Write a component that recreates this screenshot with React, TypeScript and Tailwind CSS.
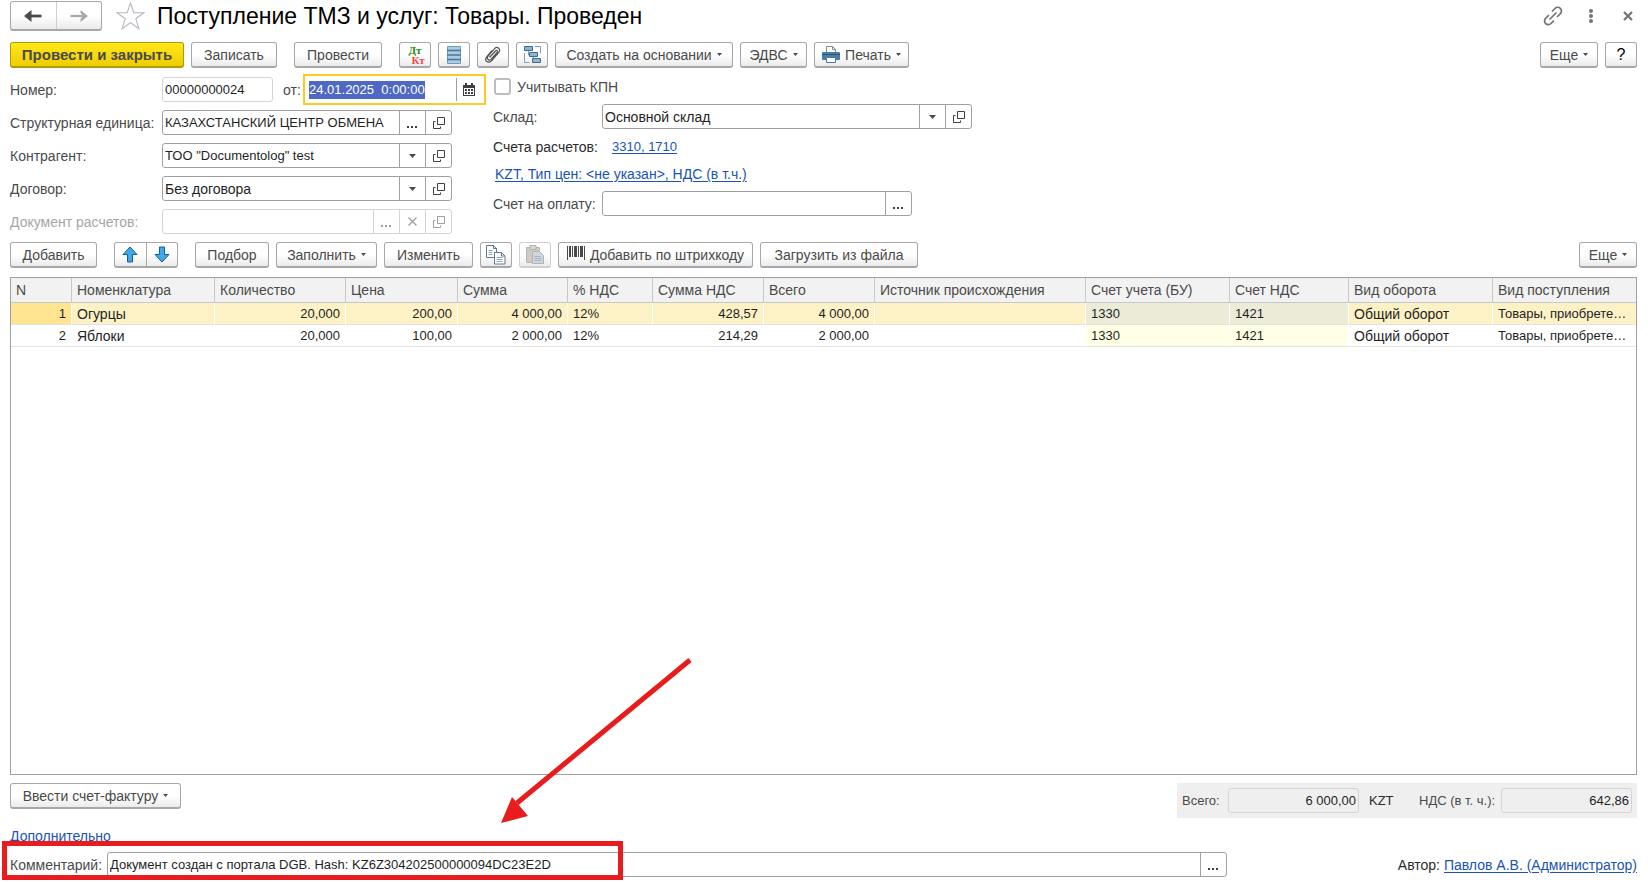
import { useEffect, useRef } from 'react';
import type { ReactNode } from 'react';
import clsx from 'clsx';

const columns = [
  { title: 'N', width: 'w-[61px]', align: 'text-right' },
  { title: 'Номенклатура', width: 'w-[143px]', size: 'text-[14px]' },
  { title: 'Количество', width: 'w-[131px]', align: 'text-right' },
  { title: 'Цена', width: 'w-[112px]', align: 'text-right' },
  { title: 'Сумма', width: 'w-[110px]', align: 'text-right' },
  { title: '% НДС', width: 'w-[85px]' },
  { title: 'Сумма НДС', width: 'w-[111px]', align: 'text-right' },
  { title: 'Всего', width: 'w-[111px]', align: 'text-right' },
  { title: 'Источник происхождения', width: 'w-[211px]' },
  { title: 'Счет учета (БУ)', width: 'w-[144px]', account: true },
  { title: 'Счет НДС', width: 'w-[119px]', account: true },
  { title: 'Вид оборота', width: 'w-[144px]', size: 'text-[14px]' },
  { title: 'Вид поступления', width: 'w-auto' },
];

const rows = [
  ['1', 'Огурцы', '20,000', '200,00', '4 000,00', '12%', '428,57', '4 000,00', '', '1330', '1421', 'Общий оборот', 'Товары, приобрете…'],
  ['2', 'Яблоки', '20,000', '100,00', '2 000,00', '12%', '214,29', '2 000,00', '', '1330', '1421', 'Общий оборот', 'Товары, приобрете…'],
];

function Caret({ small }: { small?: boolean }) {
  return (
    <svg width={small ? 5 : 7} height={small ? 3 : 4} viewBox="0 0 7 4" className="shrink-0">
      <path d="M0 0h7L3.5 4z" fill="#4a4a4a" />
    </svg>
  );
}

function OpenIcon() {
  return (
    <svg width="12" height="12" viewBox="0 0 12 12" fill="none" stroke="currentColor">
      <path d="M4.5 0.5h7v7h-7zM2.5 4.5h-2v7h7v-2" />
    </svg>
  );
}

type ButtonProps = {
  children: ReactNode;
  className?: string;
  menu?: boolean;
  label?: string;
  disabled?: boolean;
};

function Button({ children, className, menu, label, disabled }: ButtonProps) {
  return (
    <button
      type="button"
      aria-label={label}
      disabled={disabled}
      className={clsx(
        'flex h-[26px] shrink-0 items-center justify-center gap-[5px] rounded-[3px] border border-b-2 whitespace-nowrap',
        disabled ? 'border-[#cfcfcf]' : 'border-[#a8a8a8]',
        className ?? '',
        !className?.includes('from-') && 'bg-linear-to-b from-white from-50% to-[#ebebeb]',
      )}
    >
      {children}
      {menu && <Caret small />}
    </button>
  );
}

function SideButton({ children, label, disabled }: { children: ReactNode; label: string; disabled?: boolean }) {
  return (
    <button
      type="button"
      aria-label={label}
      disabled={disabled}
      className={clsx(
        'flex w-[26px] shrink-0 items-center justify-center border-l',
        disabled ? 'border-[#d4d4d4] text-[#a0a0a0]' : 'border-[#a0a0a0] text-[#404040]',
      )}
    >
      {children}
    </button>
  );
}

function Dots() {
  return (
    <svg width="11" height="12" viewBox="0 0 11 12" fill="currentColor">
      <path d="M0 9h2v2H0zM4 9h2v2H4zM8 9h2v2H8z" />
    </svg>
  );
}

function Field({ children, className, disabled }: { children: ReactNode; className?: string; disabled?: boolean }) {
  return (
    <div
      className={clsx(
        'flex h-[25px] overflow-hidden rounded-[3px] border bg-white',
        disabled ? 'border-[#d4d4d4]' : 'border-[#a0a0a0]',
        className,
      )}
    >
      {children}
    </div>
  );
}

function SelectField({ id, value, className }: { id: string; value: string; className: string }) {
  return (
    <Field className={className}>
      <div className="relative flex min-w-0 flex-1">
        <select id={id} className="w-full appearance-none bg-transparent pl-[2px] text-[#1f1f1f] outline-none">
          <option>{value}</option>
        </select>
        <span className="pointer-events-none absolute inset-y-0 right-0 flex w-[26px] items-center justify-center border-l border-[#a0a0a0]">
          <Caret />
        </span>
      </div>
      <SideButton label="Открыть">
        <OpenIcon />
      </SideButton>
    </Field>
  );
}

const input = 'min-w-0 flex-1 bg-transparent pl-[2px] text-[13px] text-[#1f1f1f] outline-none';
const totalInput = 'h-[25px] w-[131px] rounded-[3px] border border-[#d4d4d4] pr-[2px] text-right text-[#1f1f1f]';
const link = 'text-[#1a53b5] underline underline-offset-2';

function TitleBar() {
  return (
    <header className="flex h-[30px] items-center">
      <div className="flex h-[30px] w-[92px] rounded-[3px] border border-b-2 border-[#a8a8a8] bg-linear-to-b from-white from-50% to-[#ebebeb]">
        <button type="button" aria-label="Назад" className="flex flex-1 items-center justify-center border-r border-[#cfcfcf]">
          <svg width="18" height="12" viewBox="0 0 18 12">
            <path d="M4 6h13.500" stroke="#4a4a4a" strokeWidth="2.800" />
            <path d="M0 6L7.500 0v12z" fill="#4a4a4a" />
          </svg>
        </button>
        <button type="button" aria-label="Вперед" className="flex flex-1 items-center justify-center">
          <svg width="18" height="12" viewBox="0 0 18 12">
            <path d="M.5 6H14" stroke="#a9a9a9" strokeWidth="2.200" />
            <path d="M18 6L10.500 0v3L13 6l-2.500 3v3z" fill="#a9a9a9" />
          </svg>
        </button>
      </div>
      <button type="button" aria-label="В избранное" className="ml-[14px]">
        <svg width="29" height="28" viewBox="0 0 29 28" fill="none" stroke="#b4b9c0" strokeWidth="1.1">
          <path d="M14.500 1l3.300 9.700 10.200.1-8.200 6 3.100 9.900-8.400-6-8.400 6 3.100-9.900-8.200-6 10.200-.1z" />
        </svg>
      </button>
      <h1 className="ml-3 text-[23px] leading-[28px] text-black">Поступление ТМЗ и услуг: Товары. Проведен</h1>
      <div className="ml-auto flex items-center pr-1 text-[#747474]">
        <button type="button" aria-label="Ссылка">
          <svg width="20" height="20" viewBox="0 0 20 20" fill="none" stroke="currentColor" strokeWidth="1.7">
            <path d="M9 5.5L12 2.5a3.7 3.7 0 0 1 5.4 5.2L14 11M11 14.5L8 17.500a3.700 3.700 0 0 1-5.400-5.200L6 9M6.500 13.500l7-7" />
          </svg>
        </button>
        <button type="button" aria-label="Меню" className="ml-[26px]">
          <svg width="4" height="14" viewBox="0 0 4 14" fill="currentColor">
            <circle cx="2" cy="2" r="2" />
            <circle cx="2" cy="7" r="2" />
            <circle cx="2" cy="12" r="2" />
          </svg>
        </button>
        <button type="button" aria-label="Закрыть" className="ml-[30px]">
          <svg width="10" height="10" viewBox="0 0 10 10" fill="none" stroke="currentColor" strokeWidth="2.2">
            <path d="M1 1l8 8M9 1L1 9" />
          </svg>
        </button>
      </div>
    </header>
  );
}

function MainToolbar() {
  return (
    <div className="mt-[11px] flex">
      <Button className="w-[174px] border-[#b09a00] bg-linear-to-b from-[#ffe81a] to-[#efcd00] text-[15px] font-bold">
        Провести и закрыть
      </Button>
      <Button className="ml-[7px] w-[86px]">Записать</Button>
      <Button className="ml-[17px] w-[88px]">Провести</Button>
      <div className="ml-[17px] flex gap-[7px]">
        <Button className="w-[32px]" label="Дт/Кт">
          <span className="flex flex-col font-['Liberation_Serif',serif] text-[11px] leading-[10px] font-bold">
            <span className="text-[#2a8a0c]">Дт</span>
            <span className="pl-[6px] text-[#f04848]">Кт</span>
          </span>
        </Button>
        <Button className="w-[32px]" label="Регистр">
          <svg width="14" height="18" viewBox="0 0 14 18">
            <path d="M0.500 0.500h13v17h-13z" fill="#a9cbe4" stroke="#6f9cbc" />
            <path d="M0 4.500h14M0 9h14M0 13.500h14" stroke="#4d7593" strokeWidth="1.500" />
          </svg>
        </Button>
        <Button className="w-[32px]" label="Файлы">
          <svg width="16" height="17" viewBox="0 0 16 17" fill="none" stroke="#555" strokeWidth="1.2">
            <path d="M4.500 11.500l6-6.500c1.300-1.400 2.800.2 1.600 1.500L6.300 13.200c-2.200 2.300-5.300-.6-3.200-3L9.600 2.700c2.700-2.900 6.700.5 4.200 3.600l-7 8.200c-3.500 3.700-7.800.4-5.300-3.500L7 4.500" />
          </svg>
        </Button>
        <Button className="w-[32px]" label="Структура подчиненности">
          <svg width="19" height="19" viewBox="0 0 19 19" fill="none">
            <path d="M5.500 5v5h2M10.500 12v4M12 1.500h5.500v7M1.500 8v9.500h5" stroke="#7ba0bb" />
            <path d="M1.500 1.500h8v4h-8zM6.500 7.500h8v4h-8zM9.500 13.500h8v4h-8z" fill="#8fb4d0" stroke="#3c6a8c" />
          </svg>
        </Button>
        <Button className="w-[178px]" menu>Создать на основании</Button>
        <Button className="w-[67px]" menu>ЭДВС</Button>
        <Button className="w-[95px]" menu>
          <svg width="18" height="19" viewBox="0 0 18 19">
            <path d="M4.500 8V1.500h6l3 3V8" fill="#fff" stroke="#7b8b99" />
            <path d="M10.500 1.500v3h3" fill="none" stroke="#7b8b99" />
            <rect x="0" y="7" width="18" height="8" rx="1" fill="#4b7da3" />
            <path d="M0 9.500h18" stroke="#26587c" />
            <path d="M4.500 12.500h9v5h-9z" fill="#fff" stroke="#4b7da3" />
          </svg>
          Печать
        </Button>
      </div>
      <div className="ml-auto flex gap-[7px]">
        <Button className="w-[58px]" menu>Еще</Button>
        <Button className="w-[32px] text-[16px] text-black">?</Button>
      </div>
    </div>
  );
}

function HeaderFields() {
  const dateRef = useRef<HTMLInputElement>(null);

  useEffect(() => {
    dateRef.current?.focus();
    dateRef.current?.select();
  }, []);

  return (
    <div className="mt-[9px] flex items-start">
      <div className="grid w-[477px] grid-cols-[152px_290px] items-center gap-y-2">
        <label htmlFor="number">Номер:</label>
        <div className="flex h-[25px] items-center">
          <Field disabled className="w-[111px] shrink-0">
            <input id="number" defaultValue="00000000024" className={input} />
          </Field>
          <label htmlFor="date" className="w-[30px] shrink-0 pl-[10px]">от:</label>
          <div className="flex h-[31px] w-[183px] shrink-0 border-2 border-[#fcca20] bg-white py-[2px]">
            <input
              id="date"
              ref={dateRef}
              defaultValue="24.01.2025  0:00:00"
              className="min-w-0 flex-1 pl-1 text-[13px] text-[#1f1f1f] outline-none selection:bg-[#4f68c4] selection:text-white"
            />
            <button type="button" aria-label="Календарь" className="flex w-[28px] items-center border-l border-[#a0a0a0] pl-[6px]">
              <svg width="12" height="13" viewBox="0 0 12 13">
                <path d="M0 2h12v11H0z" fill="#404040" />
                <path d="M2 0h2v3H2zM8 0h2v3H8z" fill="#404040" />
                <path d="M1 5h10v7H1z" fill="#fff" />
                <path d="M2 6h2v2H2zM5 6h2v2H5zM8 6h2v2H8zM2 9h2v2H2zM5 9h2v2H5zM8 9h2v2H8z" fill="#404040" />
              </svg>
            </button>
          </div>
        </div>

        <label htmlFor="unit" className="whitespace-nowrap">Структурная единица:</label>
        <Field>
          <input id="unit" defaultValue="КАЗАХСТАНСКИЙ ЦЕНТР ОБМЕНА" className={input} />
          <SideButton label="Выбрать"><Dots /></SideButton>
          <SideButton label="Открыть"><OpenIcon /></SideButton>
        </Field>

        <label htmlFor="partner">Контрагент:</label>
        <SelectField id="partner" value={'ТОО "Documentolog" test'} className="w-full text-[13px]" />

        <label htmlFor="contract">Договор:</label>
        <SelectField id="contract" value="Без договора" className="w-full" />

        <label htmlFor="settlement" className="text-[#a6a6a6]">Документ расчетов:</label>
        <Field disabled>
          <input id="settlement" disabled className={input} />
          <SideButton label="Выбрать" disabled><Dots /></SideButton>
          <SideButton label="Очистить" disabled>
            <svg width="9" height="9" viewBox="0 0 9 9" stroke="currentColor" strokeWidth="1.400">
              <path d="M.5.5l8 8M8.500.5l-8 8" />
            </svg>
          </SideButton>
          <SideButton label="Открыть" disabled><OpenIcon /></SideButton>
        </Field>
      </div>

      <div className="ml-[6px] flex flex-col pt-px">
        <label className="flex h-[17px] items-center gap-[6px] pl-px">
          <input type="checkbox" className="size-[17px] appearance-none rounded-[3px] border-2 border-[#bdbdbd] bg-white" />
          Учитывать КПН
        </label>
        <div className="mt-[9px] flex items-center">
          <label htmlFor="warehouse" className="w-[109px]">Склад:</label>
          <SelectField id="warehouse" value="Основной склад" className="w-[370px]" />
        </div>
        <div className="mt-[9px] flex h-[18px] items-center text-[#2b2b2b]">
          <span className="w-[119px]">Счета расчетов:</span>
          <a href="#accounts" className={clsx(link, 'text-[13px]')}>3310, 1710</a>
        </div>
        <div className="mt-[9px] flex h-[18px] items-center pl-[2px]">
          <a href="#prices" className={link}>KZT, Тип цен: &lt;не указан&gt;, НДС (в т.ч.)</a>
        </div>
        <div className="mt-2 flex items-center">
          <label htmlFor="invoice" className="w-[109px]">Счет на оплату:</label>
          <Field className="w-[310px]">
            <input id="invoice" className={input} />
            <SideButton label="Выбрать"><Dots /></SideButton>
          </Field>
        </div>
      </div>
    </div>
  );
}

function PagesIcon() {
  return (
    <svg width="20" height="20" viewBox="0 0 20 20" fill="#fff" stroke="#64788a">
      <path d="M.5.5h7l3 3v9H.5zM7.500.5v3h3" />
      <path d="M2.500 5.500h4M2.500 7.500h4M2.500 9.500h4" stroke="#8fa6b8" />
      <path d="M8.500 7.500h7l3.500 3.500v8H8.500zM15.500 7.500v3.500H19" />
      <path d="M10.500 12.500h6M10.500 14.500h6M10.500 16.500h6" stroke="#8fa6b8" />
    </svg>
  );
}

function TableToolbar() {
  return (
    <div className="mt-2 flex gap-[7px]">
      <Button className="w-[87px]">Добавить</Button>
      <div className="mx-[10px] flex h-[26px] w-[64px] rounded-[3px] border border-b-2 border-[#a8a8a8] bg-linear-to-b from-white from-50% to-[#ebebeb]">
        <button type="button" aria-label="Вверх" className="flex flex-1 items-center justify-center border-r border-[#a8a8a8]">
          <svg width="16" height="17" viewBox="0 0 16 17">
            <path d="M8 1l7 7.500h-4.500V16h-5V8.500H1z" fill="#3fa9ec" stroke="#15608f" />
          </svg>
        </button>
        <button type="button" aria-label="Вниз" className="flex flex-1 items-center justify-center">
          <svg width="16" height="17" viewBox="0 0 16 17">
            <path d="M8 16l7-7.500h-4.500V1h-5v7.500H1z" fill="#3fa9ec" stroke="#15608f" />
          </svg>
        </button>
      </div>
      <Button className="w-[74px]">Подбор</Button>
      <Button className="w-[101px]" menu>Заполнить</Button>
      <Button className="w-[89px]">Изменить</Button>
      <Button className="w-[32px]" label="Скопировать"><PagesIcon /></Button>
      <Button className="w-[32px]" label="Вставить" disabled>
        <svg width="18" height="19" viewBox="0 0 18 19">
          <path d="M.5 2.500h13v15H.5z" fill="#cfcac4" stroke="#b9b4ae" />
          <path d="M4 .5h6v4H4z" fill="#d9d9d9" stroke="#b0b0b0" />
          <path d="M6.500 6.500h7l4 4v8h-11z" fill="#cfd6dc" stroke="#a9b4bd" />
          <path d="M8.500 11.500h6M8.500 13.500h7M8.500 15.500h7" stroke="#a9b4bd" />
        </svg>
      </Button>
      <Button className="w-[195px]">
        <svg width="18" height="14" viewBox="0 0 18 14" className="self-start mt-[3px]" fill="#4a4a4a">
          <path d="M0 0h1v14H0zM2 0h2v11H2zM5 0h1v11H5zM7 0h3v11H7zM11 0h1v11h-1zM13 0h3v11h-3zM17 0h1v14h-1z" />
        </svg>
        Добавить по штрихкоду
      </Button>
      <Button className="w-[158px]">Загрузить из файла</Button>
      <Button className="ml-auto w-[58px]" menu>Еще</Button>
    </div>
  );
}

function GoodsTable() {
  return (
    <div className="mt-[9px] flex-1 border border-[#a0a0a0] bg-white">
      <table className="w-full table-fixed border-separate border-spacing-0">
        <thead>
          <tr className="h-[25px]">
            {columns.map((col) => (
              <th
                key={col.title}
                className={clsx(
                  'border-r border-b border-[#c8c8c8] bg-[#f2f2f2] pl-[5px] text-left font-normal whitespace-nowrap last:border-r-0',
                  col.width,
                )}
              >
                {col.title}
              </th>
            ))}
          </tr>
        </thead>
        <tbody>
          {rows.map((row, r) => (
            <tr key={row[0]} className="h-[22px]">
              {row.map((cell, c) => (
                <td
                  key={columns[c].title}
                  className={clsx(
                    'border-r border-b border-r-white border-b-[#e3e3e3] px-[5px] whitespace-nowrap text-[#1f1f1f] last:border-r-0',
                    columns[c].align,
                    columns[c].size ?? 'text-[13px]',
                    r === 0 && (c === 0 ? 'bg-[#ffe491]' : columns[c].account ? 'bg-[#ebebd8]' : 'bg-[#fdf1c6]'),
                    r > 0 && columns[c].account && 'bg-[#ffffe6]',
                  )}
                >
                  {cell}
                </td>
              ))}
            </tr>
          ))}
        </tbody>
      </table>
    </div>
  );
}

function Footer() {
  return (
    <footer>
      <div className="mt-2 flex items-start justify-between">
        <Button className="w-[171px]" menu>Ввести счет-фактуру</Button>
        <div className="flex h-[35px] items-center bg-[#efefef] px-[5px] text-[13px]">
          <label htmlFor="total" className="w-[46px]">Всего:</label>
          <input id="total" readOnly value="6 000,00" className={totalInput} />
          <span className="w-[60px] pl-[10px] text-[#2b2b2b]">KZT</span>
          <label htmlFor="vat" className="w-[82px] whitespace-nowrap">НДС (в т. ч.):</label>
          <input id="vat" readOnly value="642,86" className={totalInput} />
        </div>
      </div>
      <div className="mt-[9px] flex h-[18px] items-center">
        <a href="#more" className={link}>Дополнительно</a>
      </div>
      <div className="relative mt-[7px] flex items-center">
        <label htmlFor="comment" className="w-[97px]">Комментарий:</label>
        <Field className="w-[1120px]">
          <input id="comment" defaultValue="Документ создан с портала DGB. Hash: KZ6Z304202500000094DC23E2D" className={input} />
          <SideButton label="Выбрать"><Dots /></SideButton>
        </Field>
        <div className="ml-auto whitespace-nowrap text-[#2b2b2b]">
          Автор: <a href="#author" className={link}>Павлов А.В. (Администратор)</a>
        </div>
        {/* red callout around the comment and the arrow to it */}
        <div className="pointer-events-none absolute -top-[11px] -left-2 h-[39px] w-[621px] border-[5px] border-[#e81c1c]" />
        <svg width="200" height="170" viewBox="0 0 200 170" className="pointer-events-none absolute bottom-[52px] left-[487px]">
          <path d="M193 5L20 148" stroke="#e81c1c" strokeWidth="5" />
          <path d="M4 168l11-26 16 19z" fill="#e81c1c" />
        </svg>
      </div>
    </footer>
  );
}

export default function App() {
  return (
    <main className="flex min-h-screen flex-col bg-white pt-px pr-[11px] pb-[5px] pl-[10px] font-['Liberation_Sans',sans-serif] text-[14px] leading-[18px] text-[#4a4a4a]">
      <TitleBar />
      <MainToolbar />
      <HeaderFields />
      <TableToolbar />
      <GoodsTable />
      <Footer />
    </main>
  );
}
